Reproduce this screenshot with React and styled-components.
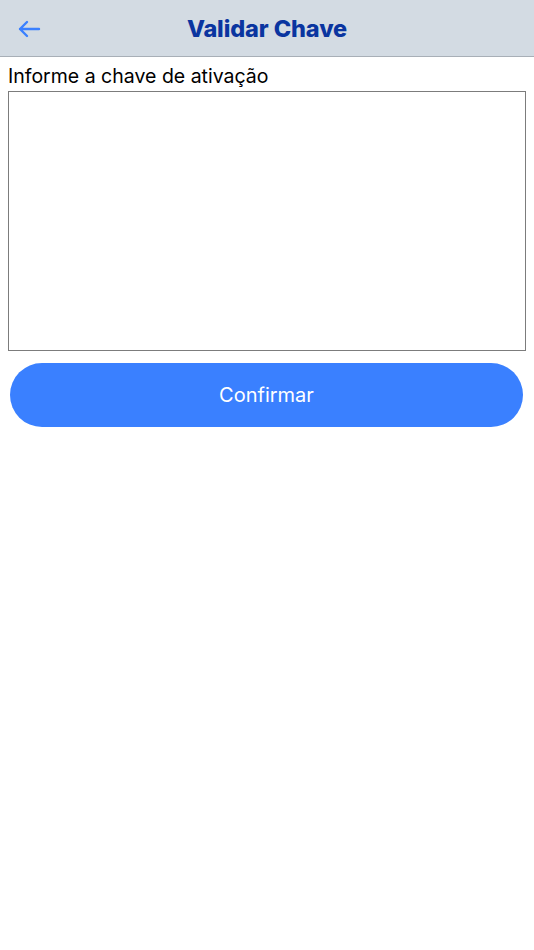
import React, { useState } from "react";
import styled, { createGlobalStyle } from "styled-components";

const GlobalStyle = createGlobalStyle`
  html, body {
    margin: 0;
    padding: 0;
    background: #ffffff;
    font-family: "Inter", "Roboto", "Liberation Sans", sans-serif;
  }
`;

const Page = styled.div`
  width: 534px;
  min-height: 950px;
  background: #ffffff;
`;

const Header = styled.div`
  height: 56px;
  background: #d3dbe3;
  border-bottom: 1px solid #a8afb7;
  display: flex;
  align-items: center;
  justify-content: center;
  position: relative;
`;

const BackBtn = styled.button`
  position: absolute;
  left: 14px;
  top: 15px;
  width: 30px;
  height: 28px;
  padding: 0;
  border: none;
  background: none;
  display: flex;
  align-items: center;
  justify-content: center;
  cursor: pointer;
`;

const Title = styled.h1`
  margin: 0;
  font-size: 23.5px;
  font-weight: 800;
  color: #0a35a0;
  letter-spacing: -0.1px;
`;

const Body = styled.div`
  padding: 6px 8px 0 8px;
  display: flex;
  flex-direction: column;
`;

const Label = styled.label`
  font-size: 19.5px;
  color: #000000;
  line-height: 26px;
  margin-bottom: 2px;
`;

const KeyInput = styled.textarea`
  box-sizing: border-box;
  width: 518px;
  height: 260px;
  border: 1.5px solid #7c7c7c;
  border-radius: 0;
  padding: 6px;
  font-family: inherit;
  font-size: 18px;
  resize: none;
  outline: none;
`;

const ConfirmBtn = styled.button`
  margin: 12px 3px 0 2px;
  height: 64px;
  border: none;
  border-radius: 32px;
  background: #3a80ff;
  color: #ffffff;
  font-family: inherit;
  font-size: 20px;
  cursor: pointer;
`;

const App = () => {
  const [key, setKey] = useState("");

  return (
    <Page>
      <GlobalStyle />
      <Header>
        <BackBtn aria-label="Voltar">
          <svg width="24" height="18" viewBox="0 0 24 18" fill="none">
            <path
              d="M22 9H3M10 2L3 9l7 7"
              stroke="#3a80ff"
              strokeWidth="2.4"
              strokeLinecap="round"
              strokeLinejoin="round"
            />
          </svg>
        </BackBtn>
        <Title>Validar Chave</Title>
      </Header>
      <Body>
        <Label>Informe a chave de ativação</Label>
        <KeyInput value={key} onChange={(e) => setKey(e.target.value)} />
        <ConfirmBtn>Confirmar</ConfirmBtn>
      </Body>
    </Page>
  );
};

export default App;
